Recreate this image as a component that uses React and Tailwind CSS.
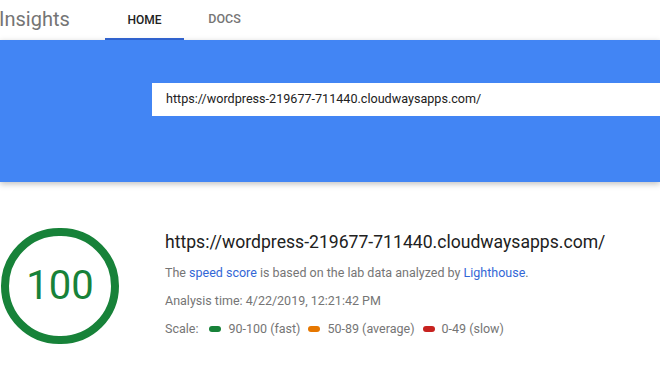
import React from "react";

const font = { fontFamily: "Roboto, 'Liberation Sans', sans-serif" };

function ScalePill({ color, label }) {
  return (
    <span className="flex items-center">
      <span className={`inline-block w-[12px] h-[6px] rounded-full mr-[7px] ${color}`}></span>
      <span>{label}</span>
    </span>
  );
}

export default function App() {
  const url = "https://wordpress-219677-711440.cloudwaysapps.com/";

  return (
    <div className="w-[660px] h-[382px] bg-white overflow-hidden" style={font}>
      {/* Header */}
      <div className="h-[40px] flex items-stretch bg-white">
        <div className="w-[106px] flex items-center text-[20px] text-[#757575] -ml-[1px] pb-[3px]">Insights</div>
        <div className="w-[79px] flex items-center justify-center text-[12px] font-medium text-[#212121] border-b-2 border-[#3367d6] pt-[2px]">
          HOME
        </div>
        <div className="w-[81px] flex items-center justify-center text-[12.5px] font-medium text-[#757575] pb-[2px]">
          DOCS
        </div>
      </div>

      {/* Search band */}
      <div className="h-[142px] bg-[#4285f4] pt-[43px] pl-[152px] relative z-10 shadow-[0_2px_6px_rgba(0,0,0,0.25)]">
        <div className="h-[33px] bg-white flex items-center pl-[14px] text-[12.6px] text-[#212121]">
          {url}
        </div>
      </div>

      {/* Result */}
      <div className="flex pt-[46px]">
        <div className="ml-[1px] w-[118px] h-[116px] shrink-0 rounded-full border-[8px] border-[#178239] flex items-center justify-center text-[40px] text-[#178239]">
          100
        </div>
        <div className="ml-[46px] pt-[2px]">
          <div className="text-[17.6px] leading-[24px] text-[#212121]">{url}</div>
          <div className="mt-[5px] text-[12.5px] leading-[28px] text-[#757575]">
            The <span className="text-[#3367d6]">speed score</span> is based on the lab data analyzed by{" "}
            <span className="text-[#3367d6]">Lighthouse</span>.
          </div>
          <div className="text-[12.5px] leading-[28px] text-[#757575]">Analysis time: 4/22/2019, 12:21:42 PM</div>
          <div className="text-[12.5px] leading-[28px] text-[#757575] flex items-center gap-[8px]">
            <span className="mr-[3px]">Scale:</span>
            <ScalePill color="bg-[#178239]" label="90-100 (fast)" />
            <ScalePill color="bg-[#e67700]" label="50-89 (average)" />
            <ScalePill color="bg-[#c7221f]" label="0-49 (slow)" />
          </div>
        </div>
      </div>
    </div>
  );
}
